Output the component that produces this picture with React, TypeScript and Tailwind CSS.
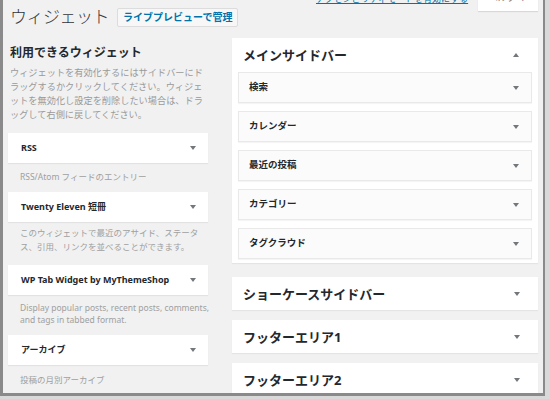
import React from "react";

const Down = () => (
  <svg width="6" height="4" viewBox="0 0 6 4" className="shrink-0">
    <path d="M0 0h6L3 4z" fill="#72777c" />
  </svg>
);
const Up = () => (
  <svg width="6" height="4" viewBox="0 0 6 4" className="shrink-0">
    <path d="M0 4h6L3 0z" fill="#72777c" />
  </svg>
);

function Widget({ title, className = "" }: { title?: string; className?: string }) {
  return (
    <div
      className={`h-[30px] shrink-0 bg-white shadow-[0_1px_1px_rgba(0,0,0,0.06)] flex items-center justify-between pl-[13px] pr-[12px] ${className}`}
    >
      {title ? <span className="text-[9px] font-bold text-[#23282d]">{title}</span> : null}
      {title ? <Down /> : null}
    </div>
  );
}

function Inner({ title }: { title: string }) {
  return (
    <div className="h-[31px] bg-[#fbfbfb] border border-[#e9e9e9] shadow-[0_1px_1px_rgba(0,0,0,0.04)] flex items-center justify-between pl-[10px] pr-[12px]">
      <span className="text-[9.5px] font-bold text-[#23282d]">{title}</span>
      <Down />
    </div>
  );
}

function Area({ title, className = "" }: { title: string; className?: string }) {
  return (
    <div
      className={`h-[33px] shrink-0 bg-white shadow-[0_1px_1px_rgba(0,0,0,0.05)] flex items-center justify-between pl-[11px] pr-[18px] ${className}`}
    >
      <span className="text-[13px] font-bold text-[#23282d] leading-[18px]">{title}</span>
      <Down />
    </div>
  );
}

export default function App() {
  return (
    <div className="w-[550px] h-[399px] bg-[#d9d9d9] overflow-hidden font-['Noto_Sans','Noto_Sans_CJK_JP',sans-serif]">
      <div className="relative w-[545px] h-[396px] bg-[#f1f1f1] border-l-[3px] border-r-[2px] border-b-[3px] border-[#8a8a8a] overflow-hidden pl-[5px]">
        {/* screen meta (cut off at top) */}
        <div className="absolute left-[313px] top-[-7px] text-[9px] leading-[12px] text-[#0073aa] underline whitespace-nowrap">
          アクセシビリティモードを有効にする
        </div>
        <div className="absolute left-[475px] top-[-11px] w-[60px] h-[22px] bg-white shadow-[0_1px_1px_rgba(0,0,0,0.1)] flex items-end justify-center pb-[8px] text-[9px] leading-[10px] text-[#72777c]">
          ヘルプ ▼
        </div>

        {/* header */}
        <div className="flex items-center gap-[8px] pt-[7px] pl-[2px] h-[27px]">
          <h1 className="text-[17px] leading-[20px] tracking-[-0.5px] text-[#32373c] font-light">ウィジェット</h1>
          <span className="h-[19px] flex items-center px-[5px] bg-[#f7f7f7] border border-[#dcdcdc] rounded-[2px] text-[10px] font-semibold text-[#0073aa] whitespace-nowrap">
            ライブプレビューで管理
          </span>
        </div>

        <div className="flex gap-[24px] mt-[11px]">
          {/* left column */}
          <div className="w-[200px] shrink-0 flex flex-col">
            <h2 className="mt-[6px] pl-[2px] text-[12px] leading-[17px] font-bold text-[#23282d] whitespace-nowrap">
              利用できるウィジェット
            </h2>
            <p className="mt-[5px] pl-[2px] text-[9.2px] leading-[14px] text-[#9a9a9a] whitespace-nowrap">
              ウィジェットを有効化するにはサイドバーにド
              <br />
              ラッグするかクリックしてください。ウィジェ
              <br />
              ットを無効化し設定を削除したい場合は、ドラ
              <br />
              ッグして右側に戻してください。
            </p>
            <Widget title="RSS" className="mt-[11px]" />
            <p className="mt-[8px] pl-[12px] text-[8.5px] leading-[12px] text-[#a0a0a0] whitespace-nowrap">
              RSS/Atom フィードのエントリー
            </p>
            <Widget title="Twenty Eleven 短冊" className="mt-[9px]" />
            <p className="mt-[4px] pl-[12px] text-[8.5px] leading-[14px] text-[#a0a0a0] whitespace-nowrap">
              このウィジェットで最近のアサイド、ステータ
              <br />
              ス、引用、リンクを並べることができます。
            </p>
            <Widget title="WP Tab Widget by MyThemeShop" className="mt-[11px]" />
            <p className="mt-[7px] pl-[12px] text-[8.5px] leading-[12px] text-[#a0a0a0] whitespace-nowrap">
              Display popular posts, recent posts, comments,
              <br />
              and tags in tabbed format.
            </p>
            <Widget title="アーカイブ" className="mt-[9px]" />
            <p className="mt-[9px] pl-[12px] text-[8.5px] leading-[12px] text-[#a0a0a0] whitespace-nowrap">
              投稿の月別アーカイブ
            </p>
            <Widget className="mt-[7px]" />
          </div>

          {/* right column */}
          <div className="w-[306px] shrink-0 flex flex-col">
            <div className="bg-white shadow-[0_1px_1px_rgba(0,0,0,0.05)] pt-[8px] pb-[4px] px-[6px]">
              <div className="flex items-center justify-between pl-[5px] pr-[13px] h-[18px]">
                <span className="text-[13px] font-bold text-[#23282d] leading-[18px]">メインサイドバー</span>
                <Up />
              </div>
              <div className="mt-[8px] flex flex-col gap-[8px]">
                <Inner title="検索" />
                <Inner title="カレンダー" />
                <Inner title="最近の投稿" />
                <Inner title="カテゴリー" />
                <Inner title="タグクラウド" />
              </div>
            </div>
            <Area title="ショーケースサイドバー" className="mt-[14px]" />
            <Area title="フッターエリア1" className="mt-[10px]" />
            <Area title="フッターエリア2" className="mt-[10px]" />
          </div>
        </div>
      </div>
    </div>
  );
}
